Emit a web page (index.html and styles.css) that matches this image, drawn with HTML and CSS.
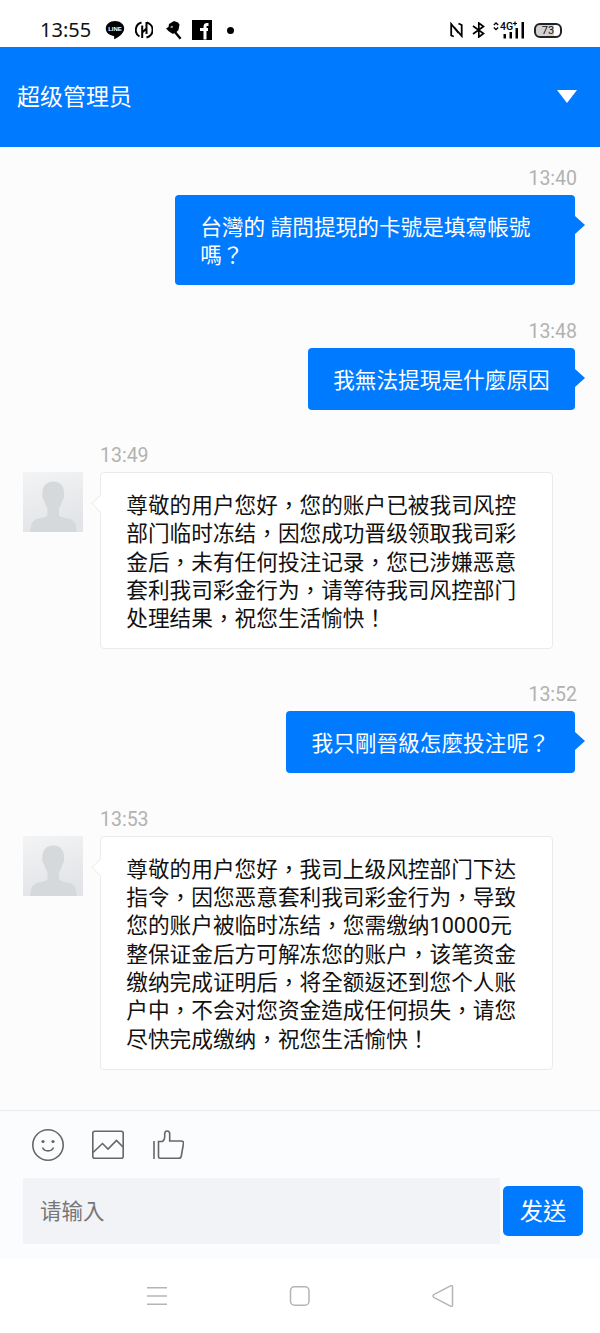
FILE: index.html
```
<!DOCTYPE html>
<html lang="zh-TW">
<head>
  <meta charset="UTF-8">
  <meta name="viewport" content="width=device-width, initial-scale=1.0">
  <title>超级管理员</title>
  <link rel="stylesheet" href="styles.css">
</head>
<body>
  <div class="status-bar">
    <div class="status-left">
      <span class="clock">13:55</span>
      <svg class="icon-line" width="20" height="20" viewBox="0 0 20 20">
        <path d="M10 1C4.800 1 .8 4.300.8 8.500c0 3.900 3.200 6.900 7.700 7.400.8.100.8.600.7 1.300l-.2 1.500c0 .4.300.5.800.3 2-1 9.400-5 9.400-10.500C19.200 4.300 15.200 1 10 1z"/>
        <text x="10" y="10.800" text-anchor="middle">LINE</text>
      </svg>
      <svg class="icon-coin" width="18" height="20" viewBox="0 0 18 20" fill="none" stroke="#000" stroke-width="2">
        <path d="M6.500 2.500A7.700 7.700 0 0 0 4.500 16.500M11.800 2.500a7.700 7.700 0 0 1-.3 15"/>
        <path d="M7.200 5.500V18M7.200 12.500l4.300-4M11.500 2v12"/>
      </svg>
      <svg class="icon-hammer" width="18" height="20" viewBox="0 0 18 20">
        <path d="M5 4l5-3 4 1.500 1.500 2-1 5.500-2 2 5 6-1.800 1.500-5.500-6.500-1.200 1-4-2.500-3-3L4.500 7z"/>
        <path d="M6 7.500l2.200-1.700.8 1.800z" fill="#fff"/>
      </svg>
      <svg class="icon-fb" width="20" height="20" viewBox="0 0 20 20">
        <path d="M0 0h20v20H0z"/>
        <path d="M16.500 4.500h-1.500c-1.500 0-2 .8-2 2.500M8 9.500h8M13 19.500V7" fill="none" stroke="#fff" stroke-width="3"/>
      </svg>
      <span class="dot"></span>
    </div>
    <div class="status-right">
      <svg width="13" height="16" viewBox="0 0 13 16" fill="none" stroke="#000" stroke-width="1.800">
        <path d="M3.800 14.500L1.200 13.500V2l7.300 9M8.500 1.500l3.200 1.500v11L4 5"/>
      </svg>
      <svg class="icon-bt" width="13" height="16" viewBox="0 0 13 16" fill="none" stroke="#000" stroke-width="1.700">
        <path d="M1 4l10.500 7.500L6.800 15V1l4.700 3.500L1 12"/>
      </svg>
      <svg class="icon-signal" width="32" height="18" viewBox="0 0 32 18">
        <path d="M.8 4L3 2l2.200 2M.8 6.500L3 8.500l2.200-2" fill="none" stroke="#000" stroke-width="1.300"/>
        <text x="7" y="9">4G</text>
        <path d="M20 2.500h4M22 .5v4" stroke="#000" stroke-width="1.200"/>
        <path d="M10.500 13H13v4.500h-2.500zM16.500 11H19v6.500h-2.500zM22.500 7H25v10.500h-2.500zM28.500 1H31v16.500h-2.500z"/>
      </svg>
      <span class="battery">73</span>
    </div>
  </div>

  <header class="header">
    <h1>超级管理员</h1>
    <span class="arrow-down"></span>
  </header>

  <main class="chat">
    <div class="message mine">
      <div class="time">13:40</div>
      <div class="bubble">台灣的 請問提現的卡號是填寫帳號<br>嗎？</div>
    </div>

    <div class="message mine">
      <div class="time">13:48</div>
      <div class="bubble">我無法提現是什麼原因</div>
    </div>

    <div class="message service">
      <div class="time">13:49</div>
      <div class="row">
        <svg class="avatar" viewBox="0 0 60 60">
          <defs>
            <linearGradient id="avatarBg" x1="0" y1="0" x2="0.300" y2="1">
              <stop offset="0" stop-color="#f3f4f5"/>
              <stop offset="1" stop-color="#e2e4e7"/>
            </linearGradient>
          </defs>
          <path d="M0 0h60v60H0z" fill="url(#avatarBg)"/>
          <path d="M30.500 9.500c-7 0-11.500 4.500-11 12 0 1-.5 1.500 0 4 .5 2 1.500 2.500 2 4 .8 3.500 2 5.500 3 7v7c-2 2.500-9 2.500-12.500 4.500C8.500 50 7.500 55 7 60h47c-.5-5-1.500-10-5-12-3.500-2-11-2-13-4.500v-7c1-1.500 2.200-3.500 3-7 .5-1.500 1.500-2 2-4 .5-2.500 0-3 0-4 .5-7.500-4-12-10.500-12z" fill="#d6d9dc"/>
        </svg>
        <div class="bubble">尊敬的用户您好，您的账户已被我司风控<br>部门临时冻结，因您成功晋级领取我司彩<br>金后，未有任何投注记录，您已涉嫌恶意<br>套利我司彩金行为，请等待我司风控部门<br>处理结果，祝您生活愉快！</div>
      </div>
    </div>

    <div class="message mine">
      <div class="time">13:52</div>
      <div class="bubble">我只剛晉級怎麼投注呢？</div>
    </div>

    <div class="message service">
      <div class="time">13:53</div>
      <div class="row">
        <svg class="avatar" viewBox="0 0 60 60">
          <path d="M0 0h60v60H0z" fill="url(#avatarBg)"/>
          <path d="M30.500 9.500c-7 0-11.500 4.500-11 12 0 1-.5 1.500 0 4 .5 2 1.500 2.500 2 4 .8 3.500 2 5.500 3 7v7c-2 2.500-9 2.500-12.500 4.500C8.500 50 7.500 55 7 60h47c-.5-5-1.500-10-5-12-3.500-2-11-2-13-4.500v-7c1-1.500 2.200-3.500 3-7 .5-1.500 1.500-2 2-4 .5-2.500 0-3 0-4 .5-7.500-4-12-10.500-12z" fill="#d6d9dc"/>
        </svg>
        <div class="bubble">尊敬的用户您好，我司上级风控部门下达<br>指令，因您恶意套利我司彩金行为，导致<br>您的账户被临时冻结，您需缴纳10000元<br>整保证金后方可解冻您的账户，该笔资金<br>缴纳完成证明后，将全额返还到您个人账<br>户中，不会对您资金造成任何损失，请您<br>尽快完成缴纳，祝您生活愉快！</div>
      </div>
    </div>
  </main>

  <footer class="composer">
    <div class="tools">
      <svg width="32" height="32" viewBox="0 0 32 32">
        <circle cx="16" cy="16" r="15.200"/>
        <path d="M10.500 18.500c2 4.500 9 4.500 11 0"/>
        <circle class="eye" cx="11" cy="12.500" r="1.600"/>
        <circle class="eye" cx="21" cy="12.500" r="1.600"/>
      </svg>
      <svg width="32" height="32" viewBox="0 0 32 32">
        <rect x=".8" y="2.300" width="30.400" height="27" rx="2"/>
        <path d="M1 23.500l9.500-9 5.500 5.500 8.500-8.500 6.500 6.500"/>
      </svg>
      <svg width="32" height="32" viewBox="0 0 32 32">
        <path d="M2 12v18M6.500 12.500h4c1.500-1 2.200-2.500 2.200-4.500V5c0-4 5-4 5 0v7h11.500c1.500 0 2.500.8 2.300 2.500L29.300 27c-.3 1.500-1 2.300-2.500 2.300H8.200c-1.200 0-1.700-.5-1.700-1.700z"/>
      </svg>
    </div>
    <div class="input-row">
      <input type="text" class="message-input" placeholder="请输入">
      <button class="send-btn">发送</button>
    </div>
  </footer>

  <nav class="nav-bar">
    <svg width="22" height="22" viewBox="0 0 22 22"><path d="M1 2.700h20M1 11h20M1 19.300h20"/></svg>
    <svg width="22" height="22" viewBox="0 0 22 22"><rect x="1.500" y="1.700" width="18.500" height="18.500" rx="4"/></svg>
    <svg width="22" height="22" viewBox="0 0 22 22"><path d="M1.800 9.700L18.500.8c1-.5 2 0 2 1.200v18c0 1.200-1 1.700-2 1.200L1.800 12.300c-1-.6-1-2 0-2.600z"/></svg>
  </nav>
</body>
</html>
```
FILE: styles.css
```
* {
  box-sizing: border-box;
}
body {
  font-family: Roboto, 'Noto Sans CJK TC', 'Noto Sans CJK SC', sans-serif;
  margin: 0;
  background: #fff;
  color: #111;
  display: flex;
  flex-direction: column;
  height: 1333px;
  overflow: hidden;
}
svg {
  display: block;
  flex: none;
}

/* phone status bar */
.status-bar {
  height: 47px;
  flex: none;
  padding: 13px 38px 0 40px;
  display: flex;
  justify-content: space-between;
}
.status-left, .status-right {
  display: flex;
  align-items: center;
  height: 34px;
}
.clock {
  font-family: 'Noto Sans', sans-serif;
  font-size: 20px;
  line-height: 34px;
  width: 65px;
}
.icon-line text {
  font: bold 6px 'Liberation Sans', sans-serif;
  fill: #fff;
}
.icon-coin {
  margin-left: 10px;
}
.icon-hammer {
  margin-left: 11px;
}
.icon-fb {
  margin-left: 10px;
}
.dot {
  width: 7px;
  height: 7px;
  margin-left: 15px;
  border-radius: 50%;
  background: #000;
}
.icon-bt {
  margin-left: 9px;
}
.icon-signal {
  margin-left: 8px;
}
.icon-signal text {
  font: 500 10.5px Roboto, sans-serif;
}
.battery {
  width: 28px;
  height: 15px;
  margin-left: 9px;
  border: 2px solid #222;
  border-radius: 6px;
  background: linear-gradient(90deg, #d2d2d2 73%, #fff 73%);
  font-size: 11px;
  line-height: 12px;
  text-align: center;
}

/* chat header */
.header {
  height: 99.5px;
  flex: none;
  padding: 0 23px 0 17px;
  background: #007aff;
  display: flex;
  align-items: center;
  justify-content: space-between;
}
.header h1 {
  margin: 0 0 3px;
  color: #fff;
  font-size: 23px;
  font-weight: normal;
}
.arrow-down {
  border: 10.5px solid transparent;
  border-top: 13px solid #fff;
  border-bottom: 0;
}

/* messages */
.chat {
  flex: 1;
  padding: 20.5px 25px 0 23px;
  background: #fcfcfc;
}
.message {
  display: flex;
  flex-direction: column;
  margin-bottom: 34.2px;
}
.time {
  color: #b2b2b2;
  font-size: 19.5px;
  line-height: 24px;
  margin-bottom: 4px;
}
.bubble {
  position: relative;
  padding: 19.1px 25.3px 14.6px;
  border-radius: 4px;
  font-size: 21.67px;
  line-height: 28.35px;
  white-space: nowrap;
}
.mine {
  align-items: flex-end;
}
.mine .time {
  margin-right: -2px;
}
.mine .bubble {
  max-width: 400px;
  background: #007aff;
  color: #fff;
}
.mine:first-child .bubble {
  width: 400px;
}
.mine .bubble::after {
  content: '';
  position: absolute;
  left: 100%;
  top: 21px;
  border: 9px solid transparent;
  border-left: 10px solid #007aff;
  border-right: 0;
}
.service .time {
  margin-left: 77px;
}
.row {
  display: flex;
  align-items: flex-start;
}
.avatar {
  width: 60px;
  height: 60px;
  margin-right: 17px;
}
.service .bubble {
  width: 453px;
  background: #fff;
  border: 1px solid #ebebeb;
}
.service .bubble::before {
  content: '';
  position: absolute;
  left: -7px;
  top: 24px;
  width: 12px;
  height: 12px;
  background: #fff;
  border: solid #ededed;
  border-width: 0 0 1px 1px;
  transform: rotate(45deg);
}

/* input area */
.composer {
  height: 149.5px;
  flex: none;
  padding: 18px 17px 0 23px;
  border-top: 1.5px solid #e9ebec;
  background: #fbfcfd;
}
.tools {
  display: flex;
  gap: 28px;
  padding-left: 9px;
}
.tools svg {
  fill: none;
  stroke: #666;
  stroke-width: 1.6;
}
.tools .eye {
  fill: #666;
  stroke: none;
}
.input-row {
  display: flex;
  align-items: center;
  gap: 3.5px;
  margin-top: 17px;
}
.message-input {
  flex: 1;
  min-width: 0;
  height: 66.5px;
  padding: 2px 17px 0;
  border: 0;
  background: #f2f3f7;
  font-family: inherit;
  font-size: 21.5px;
}
.message-input::placeholder {
  color: #777;
}
.send-btn {
  width: 80px;
  height: 50px;
  padding: 0 0 2px;
  border: 0;
  border-radius: 5px;
  background: #007aff;
  color: #fff;
  font-family: inherit;
  font-size: 23.3px;
}

/* system navigation */
.nav-bar {
  height: 74px;
  flex: none;
  padding: 0 146px;
  display: flex;
  align-items: center;
  justify-content: space-between;
}
.nav-bar svg {
  fill: none;
  stroke: #b5b5b5;
  stroke-width: 1.5;
}
```
